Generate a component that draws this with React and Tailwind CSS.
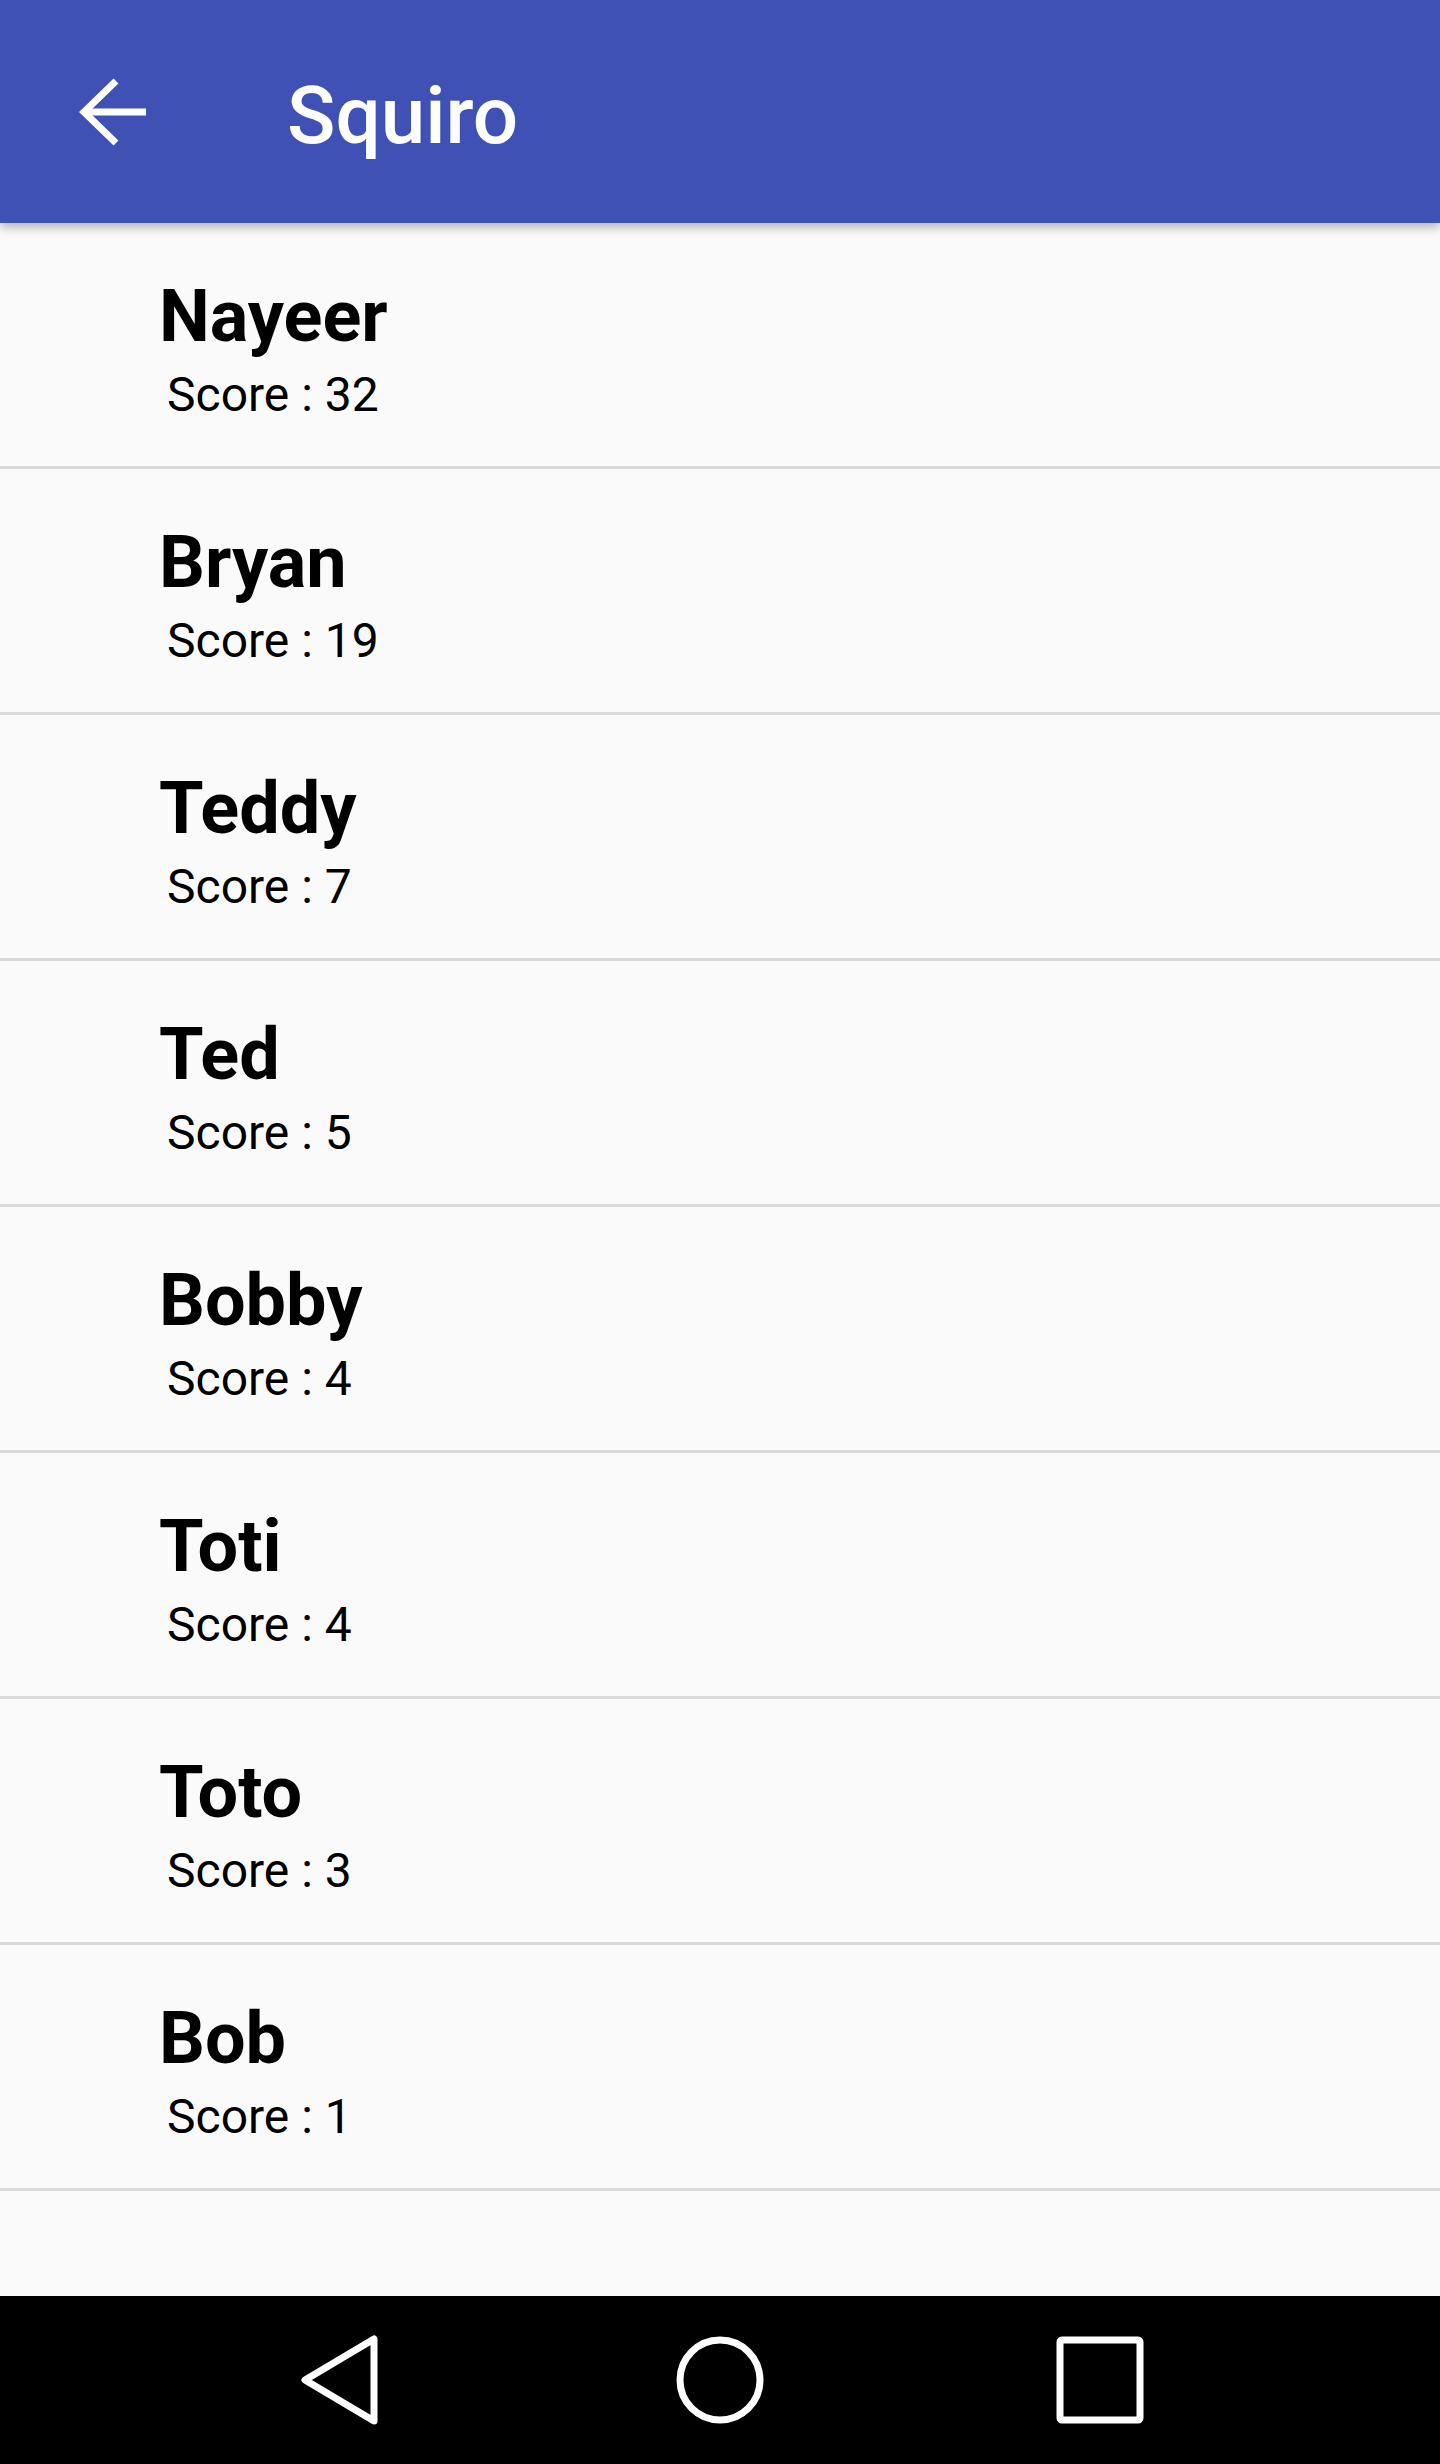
import React from "react";

const players = [
  { name: "Nayeer", score: 32 },
  { name: "Bryan", score: 19 },
  { name: "Teddy", score: 7 },
  { name: "Ted", score: 5 },
  { name: "Bobby", score: 4 },
  { name: "Toti", score: 4 },
  { name: "Toto", score: 3 },
  { name: "Bob", score: 1 },
];

function BackArrow() {
  return (
    <svg width="68" height="68" viewBox="0 0 68 68" fill="none" stroke="white" strokeWidth="7">
      <path d="M67 34H5" />
      <path d="M37 3L5 34l32 31" strokeLinejoin="miter" />
    </svg>
  );
}

function Row({ name, score }) {
  return (
    <div className="h-[246px] border-b-[3px] border-[#d9d9d9] pt-[52px] pl-[159px]">
      <div className="text-[72px] leading-[84px] font-bold text-black">{name}</div>
      <div className="text-[48px] leading-[56px] mt-[8px] ml-[8px] text-black">Score : {score}</div>
    </div>
  );
}

export default function App() {
  return (
    <div className="w-full min-h-[2464px] flex flex-col bg-[#fafafa]" style={{ fontFamily: "Roboto, 'Noto Sans', sans-serif" }}>
      {/* toolbar */}
      <div className="relative z-10 h-[223px] shrink-0 bg-[#3f51b5] flex items-center shadow-[0_4px_10px_rgba(0,0,0,0.3)]">
        <div className="ml-[79px]">
          <BackArrow />
        </div>
        <div className="ml-[140px] pt-[8px] text-[80px] leading-[80px] font-medium text-white">Squiro</div>
      </div>

      {/* list */}
      <div className="flex-1">
        {players.map((p) => (
          <Row key={p.name} name={p.name} score={p.score} />
        ))}
      </div>

      {/* nav bar */}
      <div className="h-[168px] shrink-0 bg-black flex items-center justify-center">
        <div className="w-[380px] flex justify-center">
          <svg width="78" height="90" viewBox="0 0 78 90" fill="none" stroke="white" strokeWidth="7" strokeLinejoin="round">
            <path d="M4 45L73 4v82z" />
          </svg>
        </div>
        <div className="w-[380px] flex justify-center">
          <svg width="88" height="88" viewBox="0 0 88 88" fill="none" stroke="white" strokeWidth="7">
            <circle cx="44" cy="44" r="40" />
          </svg>
        </div>
        <div className="w-[380px] flex justify-center">
          <svg width="88" height="88" viewBox="0 0 88 88" fill="none" stroke="white" strokeWidth="7">
            <rect x="4" y="4" width="80" height="80" rx="2" />
          </svg>
        </div>
      </div>
    </div>
  );
}
